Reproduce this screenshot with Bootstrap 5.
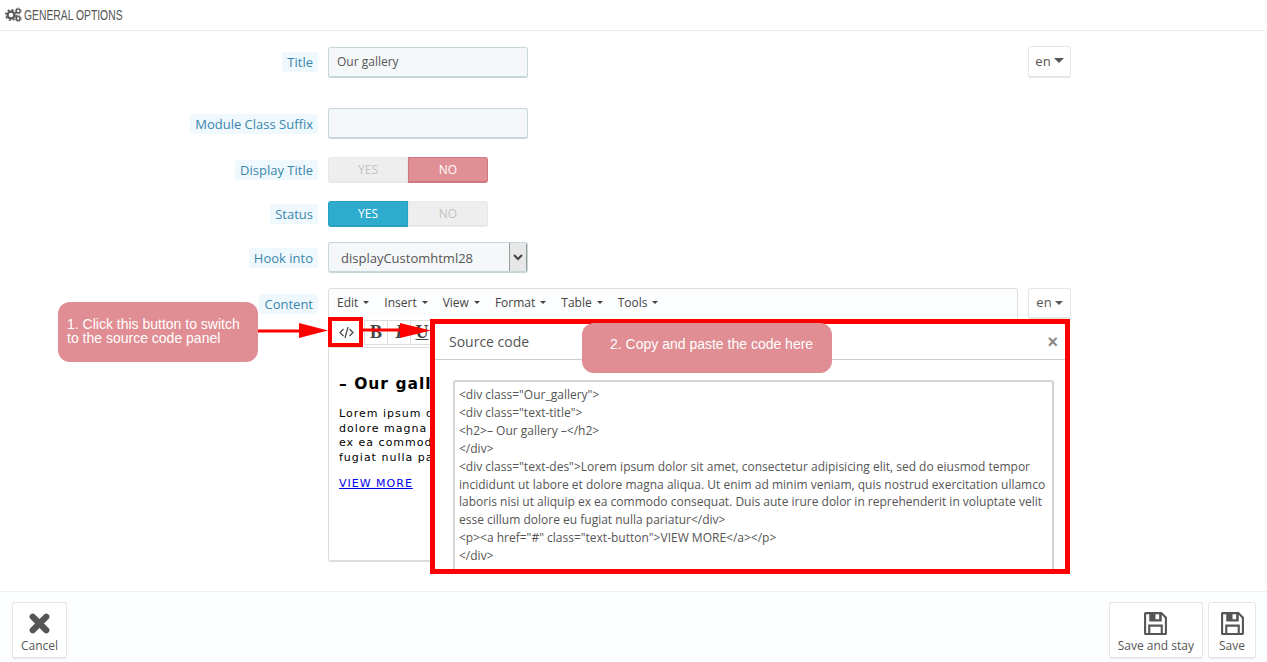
<!DOCTYPE html>
<html lang="en">
<head>
<meta charset="utf-8">
<title>General options</title>
<link href="https://cdn.jsdelivr.net/npm/bootstrap@5.3.0/dist/css/bootstrap.min.css" rel="stylesheet">
<style>
html,body{margin:0;height:662px;overflow:hidden;background:#fff}
body{font-family:"Open Sans","Liberation Sans",sans-serif;font-size:13px;color:#555}
.pg{position:relative;width:1267px;height:662px;overflow:hidden;display:flex;flex-direction:column}
.head-bar{height:31px;border-bottom:1px solid #eee;padding:7px 0 0 5px;font-family:"Liberation Sans",sans-serif;font-size:15px;line-height:15px;color:#555;display:flex;align-items:flex-start;gap:2px}
.head-txt{display:inline-block;transform:scaleX(.69);transform-origin:left center;white-space:nowrap}
.frm-row{display:flex;align-items:center}
.lbl-col{width:318px;flex:none;display:flex;justify-content:flex-end;margin-right:10px}
.lbl-tag{background:#eff8fc;color:#3a87ad;font-size:13px;line-height:20px;height:20px;padding:0 5px 0 5px;border-radius:2px}
.fld{width:200px;height:31px;padding:0 8px;background:#f5f8f9;border:1px solid #c7d6db;border-width:1px 1px 2px;border-radius:3px;color:#555;font-size:12px;box-shadow:none}
.lang-btn{width:43px;height:32px;margin-left:500px;background:#fff;border:1px solid #e6e6e6;border-bottom-width:2px;border-radius:3px;color:#555;font-size:13px;padding:0;display:flex;align-items:center;justify-content:center;gap:3px}
.caret-dn{display:inline-block;border-left:4px solid transparent;border-right:4px solid transparent;border-top:4px solid #555}
.caret-lg{border-left-width:5px;border-right-width:5px;border-top-width:5px;margin-top:-2px}
.tgl{width:160px;height:26px;display:flex}
.tgl span{flex:1;display:flex;align-items:center;justify-content:center;background:#eee;color:#c3c3c3;font-size:12px;border:1px solid #e8e8e8;border-bottom-width:2px}
.tgl span:first-child{border-radius:3px 0 0 3px}
.tgl span:last-child{border-radius:0 3px 3px 0}
.tgl .on-no{background:#e08f95;color:#fff;border-color:#cf7880}
.tgl .on-yes{background:#2eacce;color:#fff;border-color:#2a9fc0}
.sel-fld{width:200px;height:31px;padding:3px 0 0 12px;font-size:13px;color:#555;border:1px solid #c7d6db;border-width:1px 1px 2px;border-radius:3px;appearance:none;-webkit-appearance:none;background-color:#f5f8f9;background-image:url("data:image/svg+xml,%3Csvg xmlns='http://www.w3.org/2000/svg' width='18' height='29'%3E%3Crect width='18' height='29' fill='%23e7e7e7'/%3E%3Cpath d='M.5 0v29M17.500 0v29' stroke='%23999'/%3E%3Cpath d='M5 12l4 4 4-4' fill='none' stroke='%23444' stroke-width='2'/%3E%3C/svg%3E");background-repeat:no-repeat;background-position:right top}
.ed-wrap{width:690px;height:274px;flex:none;border:1px solid #ddd;border-bottom-width:2px;border-radius:3px;background:#fff;overflow:hidden;display:flex;flex-direction:column}
.ed-menu{height:27px;display:flex;align-items:center;padding-left:8px;gap:15px;font-size:12px;color:#444;background:#fcfdfe}
.ed-menu span{display:flex;align-items:center;gap:5px}
.ed-menu .caret-dn{border-left-width:3px;border-right-width:3px;border-top-width:3px;border-top-color:#444}
.ed-tools{height:32px;display:flex;align-items:flex-start;border-bottom:1px solid #ddd;padding:4px 0 0 1px;background:#fff}
.t-btn{width:24px;height:25px;border:1px solid #ddd;margin-left:-1px;display:flex;align-items:center;justify-content:center;font-family:"Liberation Serif",serif;font-weight:700;font-size:18px;color:#444;background:#fff}
.t-code{width:33px;border:0;margin:0 2px 0 0}
.ed-body{padding:25px 10px 0;font-family:"DejaVu Sans",sans-serif;color:#000;white-space:nowrap;overflow:hidden}
.ed-body h2{font-size:15.5px;font-weight:700;letter-spacing:1px;margin:0 0 12px;line-height:22px;color:#000}
.ed-body p{font-size:11px;line-height:14.7px;letter-spacing:1px;margin:0 0 7px}
.ed-body a{font-size:11px;letter-spacing:1px;color:#00e}
.foot-bar{position:absolute;left:0;right:0;top:591px;height:71px;border-top:1px solid #f0f0f0;background:#fcfdfe;padding:10px 11px 0 12px;display:flex;gap:5px}
.act-btn{height:57px;border:1px solid #e6e6e6;border-bottom-width:2px;border-radius:3px;background:#fff;color:#555;font-size:12px;line-height:16px;padding:8px 8px 0;display:flex;flex-direction:column;align-items:center}
.act-save{width:48px}
.act-btn svg{display:block;margin-bottom:2px}
.foot-gap{flex:1}
.src-modal{position:absolute;left:430px;top:319px;width:640px;height:255px;border:5px solid #f00;background:#fff;overflow:hidden;z-index:3}
.src-head{height:36px;border-bottom:1px solid #ccc;display:flex;align-items:center;justify-content:space-between;padding:0 7px 0 14px;font-size:14px;color:#555}
.src-x{font-size:18px;font-weight:700;color:#888;line-height:1;font-family:"Liberation Sans",sans-serif}
.src-area{display:block;width:601px;height:220px;margin:20px 0 0 18px;padding:4px 2px 0 4px;border:2px solid #d4d4d4;border-bottom:0;border-radius:3px;font-family:"Open Sans",sans-serif;font-size:12px;line-height:17.9px;color:#555;resize:none;overflow:hidden;background:#fff}
.note-box{position:absolute;background:#e08d93;color:#fff;font-family:"Liberation Sans",sans-serif;font-size:14px;z-index:4;border-radius:12px}
.note-a{left:58px;top:302px;width:200px;height:60px;padding:15px 8px 0 9px;line-height:14px}
.note-b{left:582px;top:323px;width:250px;height:50px;padding:13px 0 0 28px;line-height:16px}
.anno{position:absolute;left:0;top:0;z-index:5;pointer-events:none}
.r-title{margin-top:15px}
.r-suffix{margin-top:30px}
.r-disp{margin-top:18px}
.r-stat{margin-top:18px}
.r-hook{margin-top:15px}
.r-cont{margin-top:15px;align-items:flex-start}
.r-cont .lbl-col{margin-top:6px}
.l-second{margin-left:10px!important;height:31px}
</style>
</head>
<body>
<div class="pg">
  <div class="head-bar">
    <svg width="17" height="15" viewBox="0 0 17 15" aria-hidden="true">
      <circle cx="6" cy="8" r="3.4" fill="none" stroke="#555" stroke-width="2.2"/>
      <circle cx="6" cy="8" r="5.2" fill="none" stroke="#555" stroke-width="1.6" stroke-dasharray="2 2.08"/>
      <circle cx="13.2" cy="4" r="1.9" fill="none" stroke="#555" stroke-width="1.4"/>
      <circle cx="13.2" cy="4" r="3" fill="none" stroke="#555" stroke-width="1" stroke-dasharray="1.2 1.15"/>
      <circle cx="13.2" cy="11.5" r="1.9" fill="none" stroke="#555" stroke-width="1.4"/>
      <circle cx="13.2" cy="11.5" r="3" fill="none" stroke="#555" stroke-width="1" stroke-dasharray="1.2 1.15"/>
    </svg>
    <span class="head-txt">GENERAL OPTIONS</span>
  </div>

  <div class="frm-row r-title">
    <div class="lbl-col"><label class="lbl-tag">Title</label></div>
    <input class="fld form-control" value="Our gallery">
    <button class="lang-btn btn" type="button">en <i class="caret-dn caret-lg"></i></button>
  </div>
  <div class="frm-row r-suffix">
    <div class="lbl-col"><label class="lbl-tag">Module Class Suffix</label></div>
    <input class="fld form-control">
  </div>
  <div class="frm-row r-disp">
    <div class="lbl-col"><label class="lbl-tag">Display Title</label></div>
    <div class="tgl"><span>YES</span><span class="on-no">NO</span></div>
  </div>
  <div class="frm-row r-stat">
    <div class="lbl-col"><label class="lbl-tag">Status</label></div>
    <div class="tgl"><span class="on-yes">YES</span><span>NO</span></div>
  </div>
  <div class="frm-row r-hook">
    <div class="lbl-col"><label class="lbl-tag">Hook into</label></div>
    <select class="sel-fld"><option>displayCustomhtml28</option></select>
  </div>
  <div class="frm-row r-cont">
    <div class="lbl-col"><label class="lbl-tag">Content</label></div>
    <div class="ed-wrap">
      <div class="ed-menu">
        <span>Edit <i class="caret-dn"></i></span><span>Insert <i class="caret-dn"></i></span><span>View <i class="caret-dn"></i></span><span>Format <i class="caret-dn"></i></span><span>Table <i class="caret-dn"></i></span><span>Tools <i class="caret-dn"></i></span>
      </div>
      <div class="ed-tools">
        <div class="t-btn t-code"><svg width="15" height="13" viewBox="0 0 15 13" aria-hidden="true"><path d="M4.500 3L1 6.500 4.500 10M10.500 3L14 6.500 10.500 10M9 1L6 12" fill="none" stroke="#444" stroke-width="1.200"/></svg></div><div class="t-btn">B</div><div class="t-btn"><i>I</i></div><div class="t-btn"><u>U</u></div>
      </div>
      <div class="ed-body">
        <h2>– Our gallery –</h2>
        <p>Lorem ipsum dolor sit amet, consectetur adipisicing<br>dolore magna aliqua. Ut enim ad minim veniam<br>ex ea commodo consequat. Duis aute irure dolor<br>fugiat nulla pariatur</p>
        <a href="#">VIEW MORE</a>
      </div>
    </div>
    <button class="lang-btn btn ms-2 l-second" type="button">en <i class="caret-dn"></i></button>
  </div>

  <div class="foot-bar">
    <button class="act-btn" type="button">
      <svg width="25" height="25" viewBox="0 0 24 24" aria-hidden="true"><path d="M5.500 5.500l13 13M18.500 5.500l-13 13" stroke="#555" stroke-width="6" stroke-linecap="round"/></svg>
      Cancel
    </button>
    <div class="foot-gap"></div>
    <button class="act-btn" type="button">
      <svg width="25" height="25" viewBox="0 0 24 24" aria-hidden="true"><path d="M1 2.500A1.500 1.500 0 0 1 2.500 1H18l5 5v15.500a1.500 1.500 0 0 1-1.500 1.500h-19A1.500 1.500 0 0 1 1 21.500zM3 3v18h2v-8h14v8h2V7l-3-3.500V10H6V3zM7 15v6h10v-6zM12 3v5h3.500V3z" fill="#555" fill-rule="evenodd"/></svg>
      Save and stay
    </button>
    <button class="act-btn act-save" type="button">
      <svg width="25" height="25" viewBox="0 0 24 24" aria-hidden="true"><path d="M1 2.500A1.500 1.500 0 0 1 2.500 1H18l5 5v15.500a1.500 1.500 0 0 1-1.500 1.500h-19A1.500 1.500 0 0 1 1 21.500zM3 3v18h2v-8h14v8h2V7l-3-3.500V10H6V3zM7 15v6h10v-6zM12 3v5h3.500V3z" fill="#555" fill-rule="evenodd"/></svg>
      Save
    </button>
  </div>

  <div class="src-modal">
    <div class="src-head"><span>Source code</span><span class="src-x">×</span></div>
    <textarea class="src-area" readonly>&lt;div class="Our_gallery"&gt;
&lt;div class="text-title"&gt;
&lt;h2&gt;– Our gallery –&lt;/h2&gt;
&lt;/div&gt;
&lt;div class="text-des"&gt;Lorem ipsum dolor sit amet, consectetur adipisicing elit, sed do eiusmod tempor incididunt ut labore et dolore magna aliqua. Ut enim ad minim veniam, quis nostrud exercitation ullamco laboris nisi ut aliquip ex ea commodo consequat. Duis aute irure dolor in reprehenderit in voluptate velit esse cillum dolore eu fugiat nulla pariatur&lt;/div&gt;
&lt;p&gt;&lt;a href="#" class="text-button"&gt;VIEW MORE&lt;/a&gt;&lt;/p&gt;
&lt;/div&gt;</textarea>
  </div>

  <div class="note-box note-a">1. Click this button to switch to the source code panel</div>
  <div class="note-box note-b">2. Copy and paste the code here</div>

  <svg class="anno" width="1267" height="662" aria-hidden="true">
    <rect x="330" y="319" width="31" height="26" fill="none" stroke="#f00" stroke-width="4"/>
    <path d="M258 331H300" stroke="#f00" stroke-width="3"/>
    <path d="M299 323L328 330.500L299 338z" fill="#f00"/>
    <path d="M362 330H402" stroke="#f00" stroke-width="3"/>
    <path d="M400 323L431 330.500L400 338z" fill="#f00"/>
  </svg>
</div>
<script src="https://cdn.jsdelivr.net/npm/bootstrap@5.3.0/dist/js/bootstrap.bundle.min.js"></script>
</body>
</html>
